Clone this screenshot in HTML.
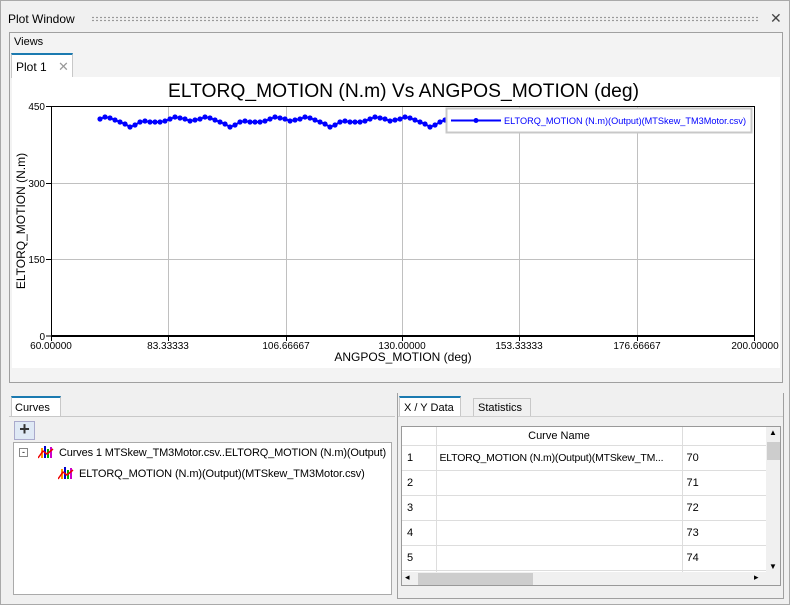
<!DOCTYPE html>
<html><head><meta charset="utf-8"><style>
*{box-sizing:border-box;margin:0;padding:0}
body{width:790px;height:605px;background:#f0f0f0;font-family:"Liberation Sans",sans-serif;font-size:12px;color:#000;position:relative;overflow:hidden;border:1px solid #a9a9a9}
.abs{position:absolute}
.tab{position:absolute;background:#fff;border:1px solid #c8c8c8;border-bottom:none;border-top:2px solid #1b7ab0;font-size:11px;padding:3px 5px;white-space:nowrap}
td{white-space:nowrap}
</style></head><body>
<div class="abs" style="left:7px;top:11px;font-size:12px">Plot Window</div>
<div class="abs" style="left:90px;top:15px;width:668px;height:6px;background-image:radial-gradient(#999 0.9px,transparent 1.1px);background-size:4px 3px"></div>
<div class="abs" style="left:769px;top:9px;font-size:14px;color:#444">✕</div>
<div class="abs" style="left:8px;top:31px;width:774px;height:351px;border:1px solid #a0a0a0;background:#f3f3f3"></div>
<div class="abs" style="left:13px;top:35px;font-size:11px">Views</div>
<div class="tab" style="left:10px;top:52px;width:62px;height:25px;padding:4px 4px;font-size:12px">Plot 1 <span style="color:#999;margin-left:8px;font-size:13px">✕</span></div>
<div class="abs" style="left:11px;top:76px;width:768px;height:291px;background:#fff"></div>
<svg class="abs" style="left:0;top:0" width="790" height="380">
<defs><marker id="m" markerWidth="6" markerHeight="6" refX="3" refY="3" markerUnits="userSpaceOnUse"><circle cx="3" cy="3" r="2.6" fill="#0000ff"/></marker></defs>
<text x="167" y="96" font-size="19" textLength="471" lengthAdjust="spacingAndGlyphs" font-family="Liberation Sans">ELTORQ_MOTION  (N.m) Vs ANGPOS_MOTION (deg)</text>
<g stroke="#c0c0c0" stroke-width="1">
<line x1="167.5" y1="105" x2="167.5" y2="335"/><line x1="285.5" y1="105" x2="285.5" y2="335"/><line x1="401.5" y1="105" x2="401.5" y2="335"/><line x1="518.5" y1="105" x2="518.5" y2="335"/><line x1="636.5" y1="105" x2="636.5" y2="335"/>
<line x1="50" y1="182.5" x2="754" y2="182.5"/><line x1="50" y1="258.5" x2="754" y2="258.5"/>
</g>
<rect x="50.5" y="105.5" width="703" height="229" fill="none" stroke="#000" stroke-width="1"/>
<line x1="50" y1="335" x2="754" y2="335" stroke="#000" stroke-width="2"/>
<g stroke="#000"><line x1="45" y1="105.5" x2="50" y2="105.5"/><line x1="45" y1="182.5" x2="50" y2="182.5"/><line x1="45" y1="258.5" x2="50" y2="258.5"/><line x1="45" y1="335" x2="50" y2="335"/>
<line x1="50.5" y1="335" x2="50.5" y2="340"/><line x1="167.5" y1="335" x2="167.5" y2="340"/><line x1="285.5" y1="335" x2="285.5" y2="340"/><line x1="401.5" y1="335" x2="401.5" y2="340"/><line x1="518.5" y1="335" x2="518.5" y2="340"/><line x1="636.5" y1="335" x2="636.5" y2="340"/><line x1="753.5" y1="335" x2="753.5" y2="340"/></g>
<g font-size="10" font-family="Liberation Sans" text-anchor="end"><text x="44" y="109">450</text><text x="44" y="186">300</text><text x="44" y="262">150</text><text x="44" y="339">0</text></g>
<g font-size="10" font-family="Liberation Sans" text-anchor="middle"><text x="50" y="348">60.00000</text><text x="167" y="348">83.33333</text><text x="285" y="348">106.66667</text><text x="401" y="348">130.00000</text><text x="518" y="348">153.33333</text><text x="636" y="348">176.66667</text><text x="754" y="348">200.00000</text></g>
<text x="402" y="360" font-size="12" text-anchor="middle" font-family="Liberation Sans">ANGPOS_MOTION (deg)</text>
<text transform="translate(24,220) rotate(-90)" font-size="12" text-anchor="middle" font-family="Liberation Sans">ELTORQ_MOTION  (N.m)</text>
<polyline fill="none" stroke="#0000ff" stroke-width="2" marker-start="url(#m)" marker-mid="url(#m)" marker-end="url(#m)" points="99,118 104,116 109,117 114,119 119,121 124,123 129,126 134,124 139,121 144,120 149,121 154,121 159,121 164,120 169,118 174,116 179,117 184,118 189,120 194,119 199,118 204,116 209,117 214,119 219,121 224,123 229,126 234,124 239,121 244,120 249,121 254,121 259,121 264,120 269,118 274,116 279,117 284,118 289,120 294,119 299,118 304,116 309,117 314,119 319,121 324,123 329,126 334,124 339,121 344,120 349,121 354,121 359,121 364,120 369,118 374,116 379,117 384,118 389,120 394,119 399,118 404,116 409,117 414,119 419,121 424,123 429,126 434,124 439,121 444,119"/>
<rect x="445.5" y="107.5" width="305" height="24" fill="#fff" stroke="#c8c8c8" stroke-width="2"/>
<line x1="450" y1="119.5" x2="500" y2="119.5" stroke="#0000ff" stroke-width="2"/><circle cx="475" cy="119.5" r="2.5" fill="#0000ff"/>
<text x="503" y="123" font-size="9.5" fill="#0000ff" textLength="242" lengthAdjust="spacingAndGlyphs" font-family="Liberation Sans">ELTORQ_MOTION (N.m)(Output)(MTSkew_TM3Motor.csv)</text>
</svg>
<div class="tab" style="left:10px;top:395px;width:50px;height:21px;font-size:11px;padding:4px 3px">Curves</div>
<div class="abs" style="left:8px;top:415px;width:386px;height:1px;background:#c8c8c8"></div>
<div class="abs" style="left:13px;top:420px;width:21px;height:19px;border:1px solid #aac;background:#dfe9f5;font-size:18px;line-height:15px;text-align:center;font-weight:bold;color:#333">+</div>
<div class="abs" style="left:12px;top:441px;width:379px;height:153px;border:1px solid #aaa;background:#fff"></div>
<div class="abs" style="left:18px;top:447px;width:9px;height:9px;border:1px solid #888;font-size:9px;line-height:6px;text-align:center">-</div>
<svg class="abs" style="left:37px;top:444px" width="16" height="14"><rect x="3" y="3" width="2" height="10" fill="#f90"/><rect x="6" y="1" width="2" height="12" fill="#00c"/><rect x="9" y="4" width="2" height="9" fill="#0a0"/><rect x="12" y="2" width="2" height="11" fill="#c0c"/><polyline points="0,13 5,6 9,9 15,4" stroke="#e00" stroke-width="1.5" fill="none"/></svg>
<div class="abs" style="left:58px;top:446px;font-size:11px;letter-spacing:-0.15px;white-space:nowrap">Curves 1 MTSkew_TM3Motor.csv..ELTORQ_MOTION (N.m)(Output)</div>
<svg class="abs" style="left:57px;top:465px" width="16" height="14"><rect x="3" y="3" width="2" height="10" fill="#f90"/><rect x="6" y="1" width="2" height="12" fill="#00c"/><rect x="9" y="4" width="2" height="9" fill="#0a0"/><rect x="12" y="2" width="2" height="11" fill="#c0c"/><polyline points="0,13 5,6 9,9 15,4" stroke="#e00" stroke-width="1.5" fill="none"/></svg>
<div class="abs" style="left:78px;top:467px;font-size:11px;letter-spacing:-0.1px;white-space:nowrap">ELTORQ_MOTION (N.m)(Output)(MTSkew_TM3Motor.csv)</div>
<div class="abs" style="left:396px;top:392px;width:387px;height:206px;border:1px solid #a0a0a0;border-top:none;background:#f0f0f0"></div>
<div class="tab" style="left:398px;top:395px;width:62px;height:21px;font-size:11px;padding:4px 4px">X / Y Data</div>
<div class="tab" style="left:472px;top:397px;width:58px;height:19px;font-size:11px;padding:3px 4px;border-top:1px solid #c8c8c8;background:#f0f0f0">Statistics</div>
<div class="abs" style="left:397px;top:415px;width:385px;height:1px;background:#d0d0d0"></div>
<div class="abs" style="left:400px;top:425px;width:380px;height:160px;border:1px solid #999;background:#fff;overflow:hidden">
<table style="border-collapse:collapse;font-size:11px;position:absolute;left:0;top:0;table-layout:fixed;width:365px">
<col style="width:34px"><col style="width:246px"><col style="width:85px">
<tr style="height:18px;background:#fff"><td style="border-right:1px solid #ddd;border-bottom:1px solid #ddd"></td><td style="text-align:center;border-right:1px solid #ddd;border-bottom:1px solid #ddd">Curve Name</td><td style="border-bottom:1px solid #ddd"></td></tr>
<tr style="height:25px"><td style="padding-left:5px;border-bottom:1px solid #ddd;border-right:1px solid #ddd">1</td><td style="padding-left:3px;border-bottom:1px solid #ddd;border-right:1px solid #ddd;font-size:10.5px;letter-spacing:-0.2px;overflow:hidden">ELTORQ_MOTION (N.m)(Output)(MTSkew_TM...</td><td style="padding-left:4px;border-bottom:1px solid #ddd">70</td></tr>
<tr style="height:25px"><td style="padding-left:5px;border-bottom:1px solid #ddd;border-right:1px solid #ddd">2</td><td style="border-bottom:1px solid #ddd;border-right:1px solid #ddd"></td><td style="padding-left:4px;border-bottom:1px solid #ddd">71</td></tr>
<tr style="height:25px"><td style="padding-left:5px;border-bottom:1px solid #ddd;border-right:1px solid #ddd">3</td><td style="border-bottom:1px solid #ddd;border-right:1px solid #ddd"></td><td style="padding-left:4px;border-bottom:1px solid #ddd">72</td></tr>
<tr style="height:25px"><td style="padding-left:5px;border-bottom:1px solid #ddd;border-right:1px solid #ddd">4</td><td style="border-bottom:1px solid #ddd;border-right:1px solid #ddd"></td><td style="padding-left:4px;border-bottom:1px solid #ddd">73</td></tr>
<tr style="height:25px"><td style="padding-left:5px;border-bottom:1px solid #ddd;border-right:1px solid #ddd">5</td><td style="border-bottom:1px solid #ddd;border-right:1px solid #ddd"></td><td style="padding-left:4px;border-bottom:1px solid #ddd">74</td></tr>
<tr style="height:20px"><td style="border-right:1px solid #ddd"></td><td style="border-right:1px solid #ddd"></td><td></td></tr>
</table>
<div class="abs" style="left:364px;top:0;width:15px;height:145px;background:#f0f0f0"><div style="position:absolute;left:1px;top:15px;width:13px;height:18px;background:#cdcdcd"></div><div style="position:absolute;top:1px;left:3px;font-size:8px">▲</div><div style="position:absolute;bottom:1px;left:3px;font-size:8px">▼</div></div>
<div class="abs" style="left:0;top:145px;width:379px;height:14px;background:#f0f0f0"><div style="position:absolute;left:16px;top:1px;width:115px;height:12px;background:#cdcdcd"></div><div style="position:absolute;left:3px;top:0;font-size:9px">◂</div><div style="position:absolute;left:352px;top:0;font-size:9px">▸</div></div>
</div>
</body></html>
